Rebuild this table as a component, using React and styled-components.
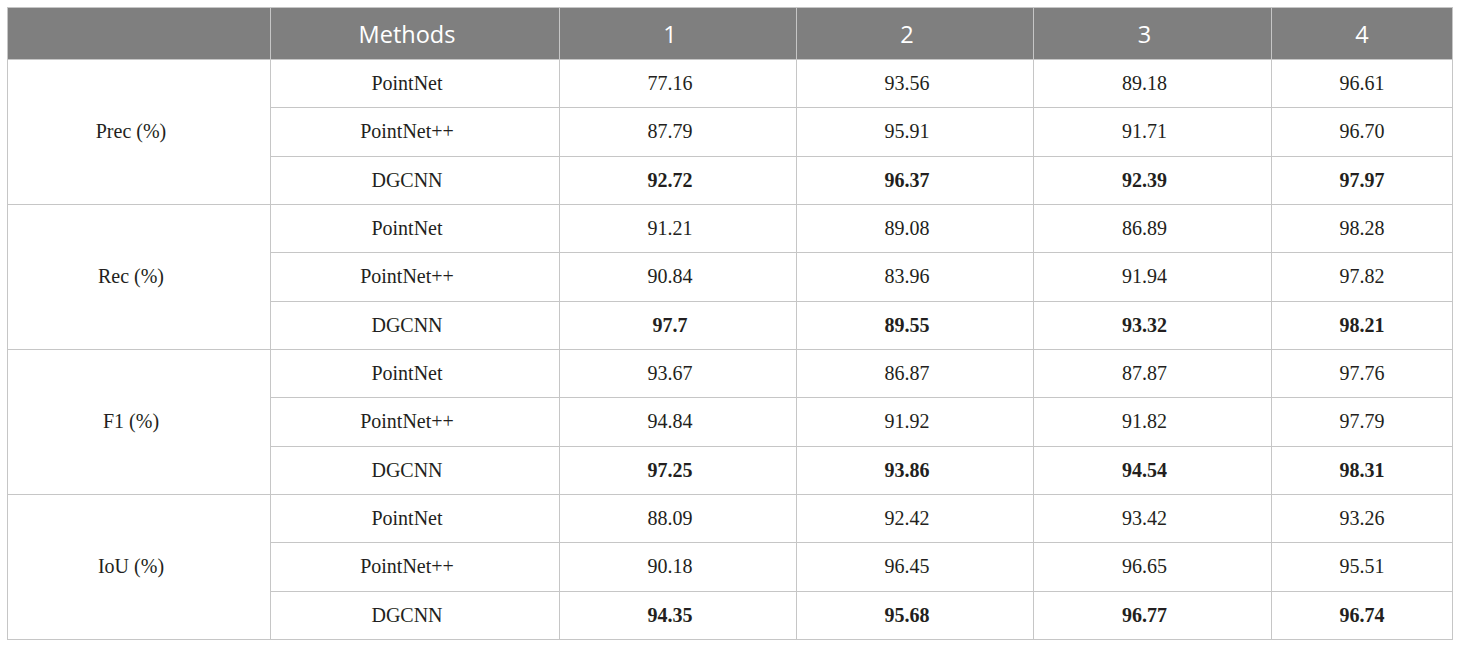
import React from "react";
import styled, { createGlobalStyle } from "styled-components";

const Global = createGlobalStyle`
  html, body { margin: 0; padding: 0; background: #fff; }
`;

const Page = styled.div`
  padding: 7px 8px 0 7px;
`;

const Table = styled.table`
  width: 1445px;
  border-collapse: collapse;
  table-layout: fixed;
  border: 1px solid #c6c6c6;
`;

const HeadRow = styled.tr`
  height: 52px;
  background: #7f7f7f;
`;

const Th = styled.th`
  border: 1px solid #c6c6c6;
  color: #fff;
  font-family: "Open Sans", "Noto Sans", sans-serif;
  font-weight: 400;
  font-size: 23.5px;
  text-align: center;
  padding: 0 ${(p) => (p.$last ? 0 : 16)}px 0 0;
  width: ${(p) => p.$w}px;
`;

const Row = styled.tr`
  height: 48.33px;
`;

const Td = styled.td`
  border: 1px solid #c6c6c6;
  font-family: "Liberation Serif", "DejaVu Serif", serif;
  font-size: 20px;
  font-weight: ${(p) => (p.$bold ? 700 : 400)};
  color: #231f20;
  text-align: center;
  vertical-align: middle;
  padding: 0 ${(p) => (p.$last ? 0 : 16)}px 0 0;
`;

const widths = [246, 272, 220, 220, 221, 180];

const groups = [
  {
    label: "Prec (%)",
    rows: [
      ["PointNet", ["77.16", "93.56", "89.18", "96.61"]],
      ["PointNet++", ["87.79", "95.91", "91.71", "96.70"]],
      ["DGCNN", ["92.72", "96.37", "92.39", "97.97"]],
    ],
  },
  {
    label: "Rec (%)",
    rows: [
      ["PointNet", ["91.21", "89.08", "86.89", "98.28"]],
      ["PointNet++", ["90.84", "83.96", "91.94", "97.82"]],
      ["DGCNN", ["97.7", "89.55", "93.32", "98.21"]],
    ],
  },
  {
    label: "F1 (%)",
    rows: [
      ["PointNet", ["93.67", "86.87", "87.87", "97.76"]],
      ["PointNet++", ["94.84", "91.92", "91.82", "97.79"]],
      ["DGCNN", ["97.25", "93.86", "94.54", "98.31"]],
    ],
  },
  {
    label: "IoU (%)",
    rows: [
      ["PointNet", ["88.09", "92.42", "93.42", "93.26"]],
      ["PointNet++", ["90.18", "96.45", "96.65", "95.51"]],
      ["DGCNN", ["94.35", "95.68", "96.77", "96.74"]],
    ],
  },
];

export default function App() {
  const heads = ["", "Methods", "1", "2", "3", "4"];
  return (
    <Page>
      <Global />
      <Table>
        <thead>
          <HeadRow>
            {heads.map((h, i) => (
              <Th key={i} $w={widths[i]} $last={i === heads.length - 1}>
                {h}
              </Th>
            ))}
          </HeadRow>
        </thead>
        <tbody>
          {groups.map((g) =>
            g.rows.map(([method, vals], ri) => {
              const bold = method === "DGCNN";
              return (
                <Row key={g.label + ri}>
                  {ri === 0 && <Td rowSpan={3}>{g.label}</Td>}
                  <Td>{method}</Td>
                  {vals.map((v, vi) => (
                    <Td key={vi} $bold={bold} $last={vi === vals.length - 1}>
                      {v}
                    </Td>
                  ))}
                </Row>
              );
            })
          )}
        </tbody>
      </Table>
    </Page>
  );
}
